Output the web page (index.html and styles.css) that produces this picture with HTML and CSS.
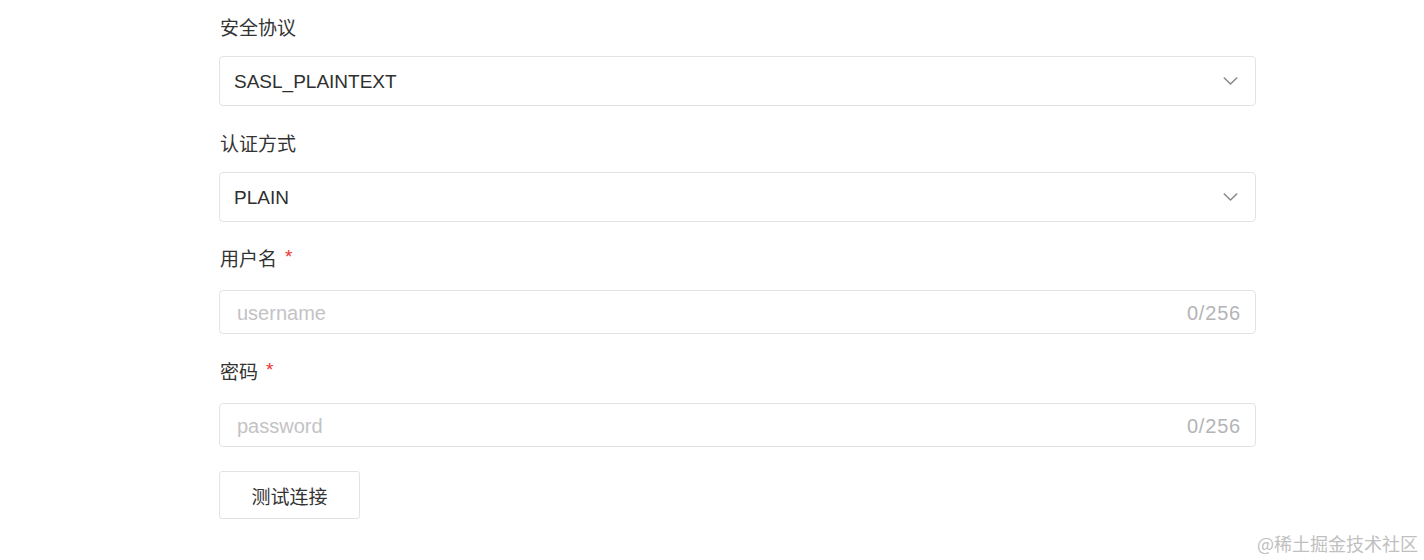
FILE: index.html
```html
<!DOCTYPE html>
<html lang="zh-CN">
<head>
<meta charset="utf-8">
<title>连接配置</title>
<link rel="stylesheet" href="styles.css">
</head>
<body>
<div class="page">
  <form class="form">
    <div class="item">
      <div class="label">安全协议</div>
      <div class="select">
        <span class="select-value">SASL_PLAINTEXT</span>
        <svg class="chevron" width="15" height="10" viewBox="0 0 15 10"><path d="M1.3 2 L7.5 8 L13.7 2" fill="none" stroke="#8a8a8a" stroke-width="1.6" stroke-linecap="round" stroke-linejoin="round"/></svg>
      </div>
    </div>
    <div class="item">
      <div class="label">认证方式</div>
      <div class="select">
        <span class="select-value">PLAIN</span>
        <svg class="chevron" width="15" height="10" viewBox="0 0 15 10"><path d="M1.3 2 L7.5 8 L13.7 2" fill="none" stroke="#8a8a8a" stroke-width="1.6" stroke-linecap="round" stroke-linejoin="round"/></svg>
      </div>
    </div>
    <div class="item item-loose">
      <div class="label label-input">用户名<span class="req">*</span></div>
      <div class="input">
        <span class="placeholder">username</span>
        <span class="count">0/256</span>
      </div>
    </div>
    <div class="item">
      <div class="label label-input">密码<span class="req">*</span></div>
      <div class="input">
        <span class="placeholder">password</span>
        <span class="count">0/256</span>
      </div>
    </div>
    <button type="button" class="btn">测试连接</button>
  </form>
  <div class="watermark">@稀土掘金技术社区</div>
</div>
</body>
</html>
```
FILE: styles.css
```css
html, body {
  margin: 0;
  padding: 0;
  background: #ffffff;
}
body {
  font-family: "Liberation Sans", "Noto Sans CJK SC", sans-serif;
  color: #333333;
  font-size: 19px;
  width: 1424px;
  height: 560px;
  overflow: hidden;
}
.page {
  position: relative;
  height: 560px;
}
.form {
  display: flex;
  flex-direction: column;
  align-items: flex-start;
  padding: 14px 0 0 219px;
  width: 1037px;
}
.item {
  width: 1037px;
  display: flex;
  flex-direction: column;
  margin-bottom: 24px;
}
.item-loose {
  margin-bottom: 25px;
}
.label {
  font-family: "Noto Sans CJK SC", sans-serif;
  font-size: 19px;
  line-height: 26px;
  height: 26px;
  color: #333333;
  padding-left: 1px;
  margin-bottom: 16px;
  display: flex;
  align-items: center;
}
.label-input {
  margin-top: -1px;
  margin-bottom: 19px;
}
.req {
  color: #f0312f;
  font-family: "Liberation Sans", sans-serif;
  font-size: 19px;
  margin-left: 8px;
  position: relative;
  top: -1px;
}
.select {
  box-sizing: border-box;
  height: 50px;
  border: 1px solid #e2e3e6;
  border-radius: 4px;
  display: flex;
  align-items: center;
  justify-content: space-between;
  padding: 0 17px 0 14px;
}
.select-value {
  font-size: 19px;
  color: #2f2f2f;
  padding-top: 1px;
}
.chevron {
  display: block;
}
.input {
  box-sizing: border-box;
  height: 44px;
  border: 1px solid #e2e3e6;
  border-radius: 4px;
  display: flex;
  align-items: center;
  justify-content: space-between;
  padding: 0 15px 0 17px;
}
.placeholder {
  color: #c3c3c6;
  font-size: 20px;
  padding-top: 2px;
}
.count {
  color: #b4b4b7;
  font-size: 20px;
  letter-spacing: 0.8px;
  margin-right: -1px;
  padding-top: 3px;
}
.btn {
  box-sizing: border-box;
  width: 141px;
  height: 48px;
  background: #ffffff;
  border: 1px solid #e2e3e6;
  border-radius: 3px;
  font-family: "Noto Sans CJK SC", sans-serif;
  font-size: 19px;
  color: #333333;
  padding: 0;
  cursor: pointer;
}
.watermark {
  position: absolute;
  right: 6px;
  bottom: 5px;
  font-family: "Noto Sans CJK SC", sans-serif;
  font-size: 18px;
  line-height: 24px;
  color: #c0c0c0;
}
```
